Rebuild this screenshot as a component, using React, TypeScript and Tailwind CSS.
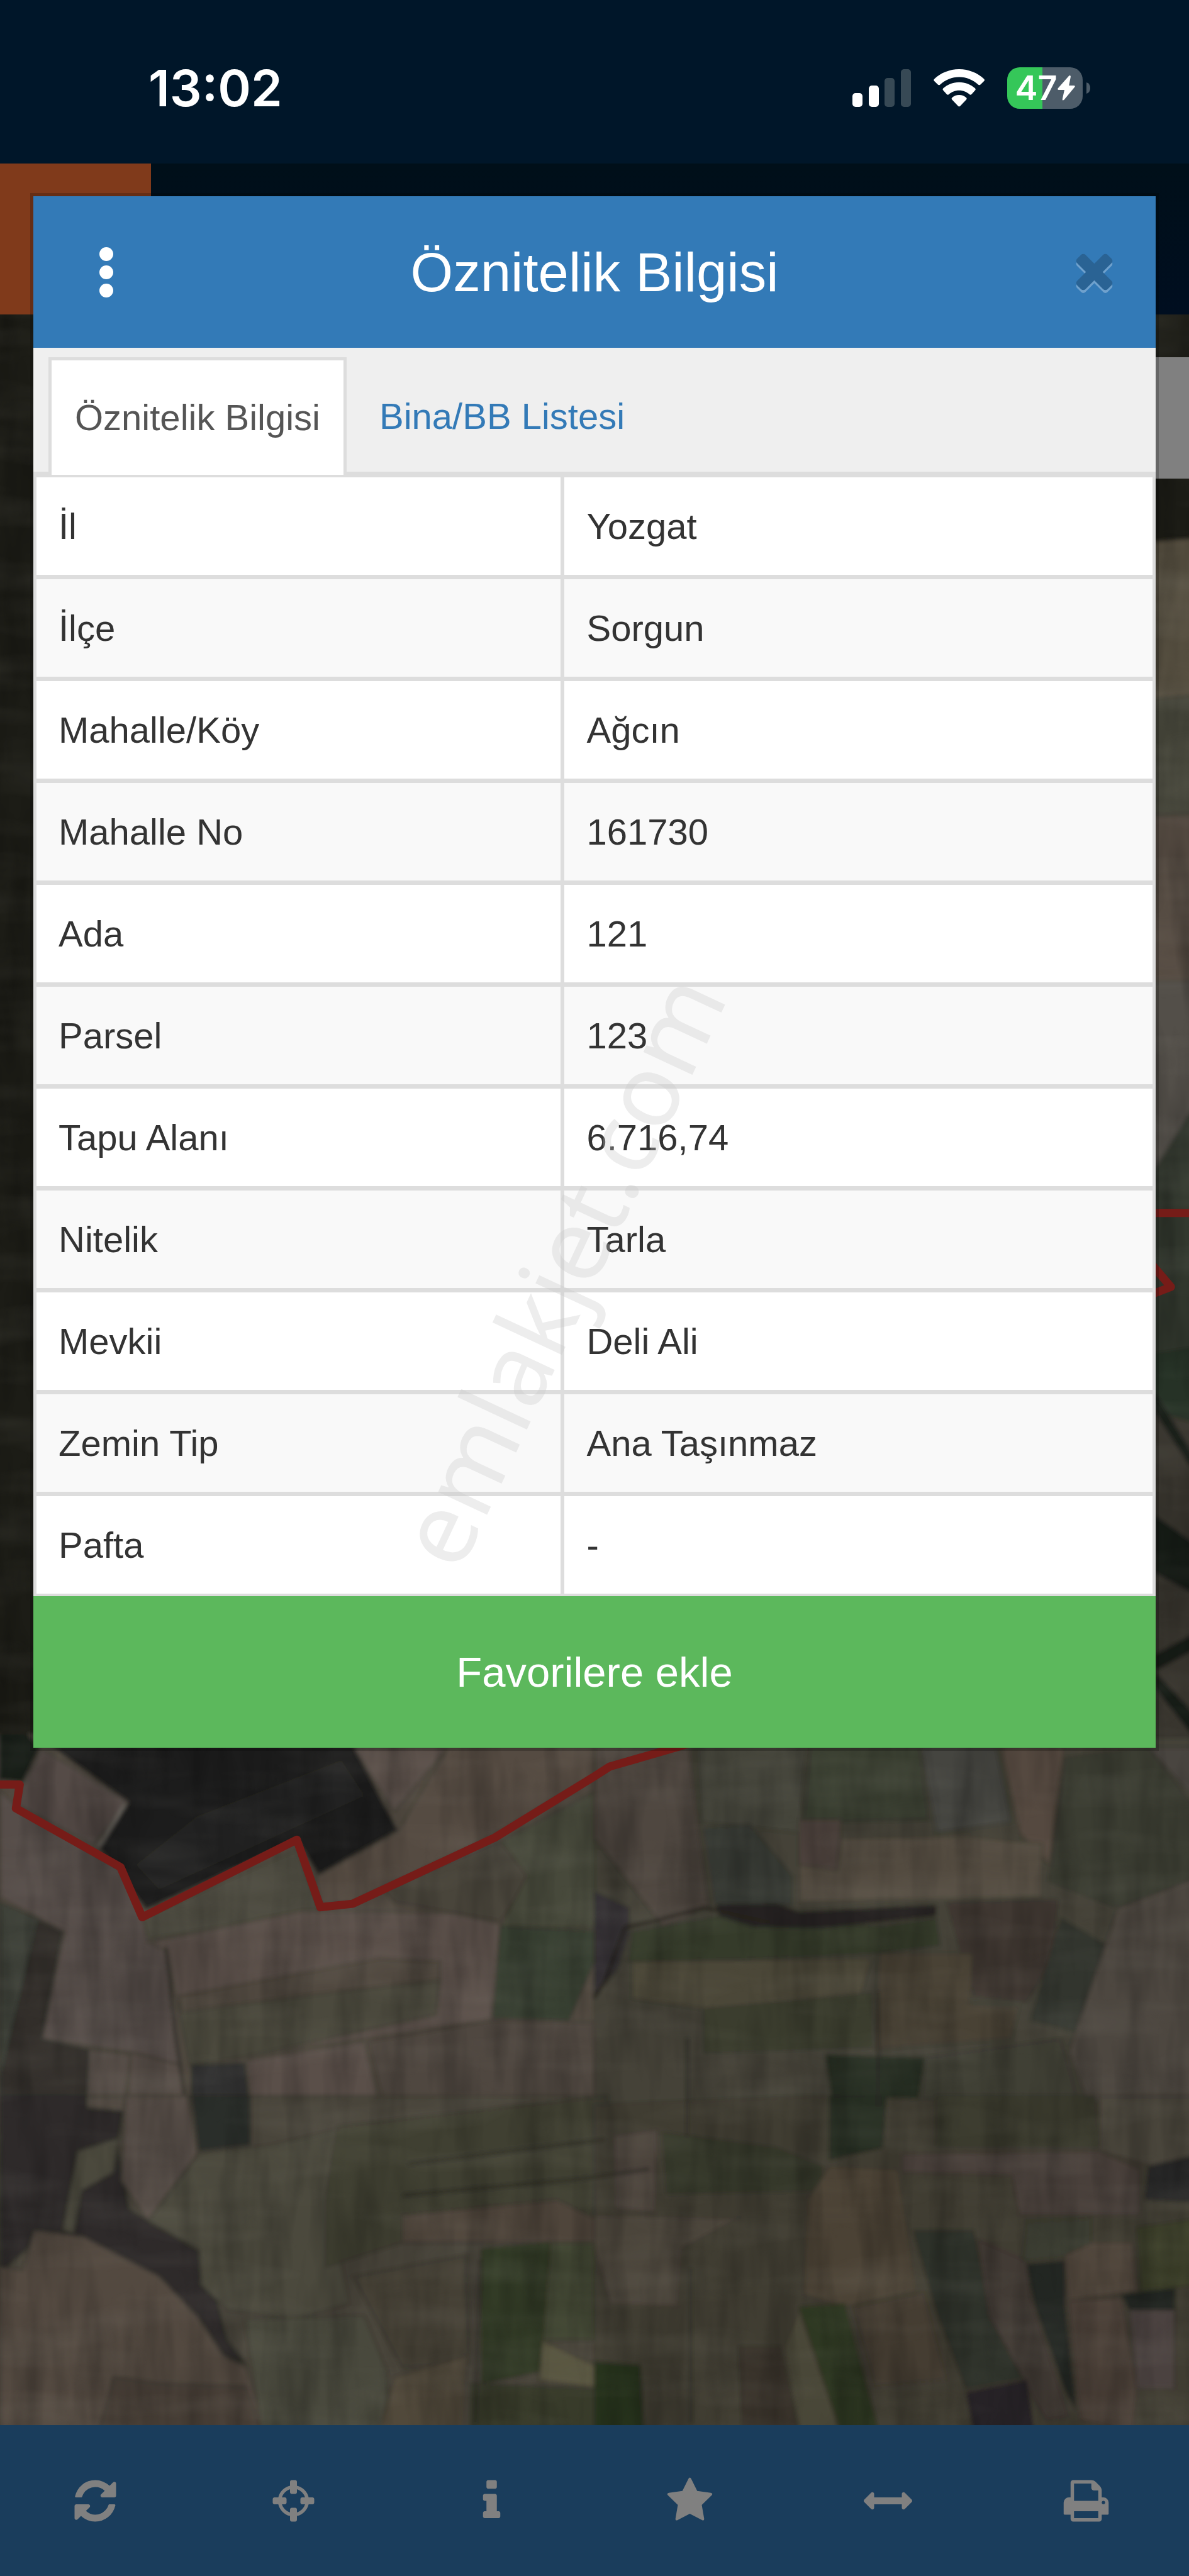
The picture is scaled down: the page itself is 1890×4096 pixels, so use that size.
const rows = [
  { label: "İl", value: "Yozgat" },
  { label: "İlçe", value: "Sorgun" },
  { label: "Mahalle/Köy", value: "Ağcın" },
  { label: "Mahalle No", value: "161730" },
  { label: "Ada", value: "121" },
  { label: "Parsel", value: "123" },
  { label: "Tapu Alanı", value: "6.716,74" },
  { label: "Nitelik", value: "Tarla" },
  { label: "Mevkii", value: "Deli Ali" },
  { label: "Zemin Tip", value: "Ana Taşınmaz" },
  { label: "Pafta", value: "-" },
];

const tools = [
  {
    label: "Yenile",
    path: "M1639 1056q0 5-1 7-64 268-268 434.5t-478 166.5q-146 0-282.5-55t-243.5-157l-129 129q-19 19-45 19t-45-19-19-45v-448q0-26 19-45t45-19h448q26 0 45 19t19 45-19 45l-137 137q71 66 161 102t187 36q134 0 250-65t186-179q11-17 53-117 8-23 30-23h192q13 0 22.5 9.5t9.5 22.5zm25-800v448q0 26-19 45t-45 19h-448q-26 0-45-19t-19-45 19-45l138-138q-148-137-349-137-134 0-250 65t-186 179q-11 17-53 117-8 23-30 23h-199q-13 0-22.5-9.5t-9.5-22.5v-7q65-268 270-434.5t480-166.5q146 0 284 55.5t245 156.5l130-129q19-19 45-19t45 19 19 45z",
  },
  {
    label: "Konum",
    path: "M1325 1024h-109q-26 0-45-19t-19-45v-128q0-26 19-45t45-19h109q-32-108-112.5-188.5t-188.5-112.5v109q0 26-19 45t-45 19h-128q-26 0-45-19t-19-45v-109q-108 32-188.5 112.5t-112.5 188.5h109q26 0 45 19t19 45v128q0 26-19 45t-45 19h-109q32 108 112.5 188.5t188.5 112.5v-109q0-26 19-45t45-19h128q26 0 45 19t19 45v109q108-32 188.5-112.5t112.5-188.5zm339-192v128q0 26-19 45t-45 19h-143q-37 161-154.5 278.5t-278.5 154.5v143q0 26-19 45t-45 19h-128q-26 0-45-19t-19-45v-143q-161-37-278.5-154.5t-154.5-278.5h-143q-26 0-45-19t-19-45v-128q0-26 19-45t45-19h143q37-161 154.5-278.5t278.5-154.5v-143q0-26 19-45t45-19h128q26 0 45 19t19 45v143q161 37 278.5 154.5t154.5 278.5h143q26 0 45 19t19 45z",
  },
  {
    label: "Bilgi",
    path: "M1216 1344v128q0 26-19 45t-45 19h-512q-26 0-45-19t-19-45v-128q0-26 19-45t45-19h64v-384h-64q-26 0-45-19t-19-45v-128q0-26 19-45t45-19h384q26 0 45 19t19 45v576h64q26 0 45 19t19 45zm-128-1152v192q0 26-19 45t-45 19h-256q-26 0-45-19t-19-45v-192q0-26 19-45t45-19h256q26 0 45 19t19 45z",
  },
  {
    label: "Favoriler",
    path: "M1728 647q0 22-26 48l-363 354 86 500q1 7 1 20 0 21-10.5 35.5t-30.5 14.5q-19 0-40-12l-449-236-449 236q-22 12-40 12-21 0-31.5-14.5t-10.5-35.5q0-6 2-20l86-500-364-354q-25-27-25-48 0-37 56-46l502-73 225-455q19-41 49-41t49 41l225 455 502 73q56 9 56 46z",
  },
  {
    label: "Ölçüm",
    path: "M1792 896q0 26-19 45l-256 256q-19 19-45 19t-45-19-19-45v-128h-1024v128q0 26-19 45t-45 19-45-19l-256-256q-19-19-19-45t19-45l256-256q19-19 45-19t45 19 19 45v128h1024v-128q0-26 19-45t45-19 45 19l256 256q19 19 19 45z",
  },
  {
    label: "Yazdır",
    path: "M448 1536h896v-256h-896v256zm0-640h896v-384h-160q-40 0-68-28t-28-68v-160h-640v640zm1152 64q0-26-19-45t-45-19-45 19-19 45 19 45 45 19 45-19 19-45zm128 0v416q0 13-9.5 22.5t-22.5 9.5h-224v160q0 40-28 68t-68 28h-960q-40 0-68-28t-28-68v-160h-224q-13 0-22.5-9.5t-9.5-22.5v-416q0-79 56.5-135.5t135.5-56.5h64v-544q0-40 28-68t68-28h672q40 0 88 20t76 48l152 152q28 28 48 76t20 88v256h64q79 0 135.5 56.5t56.5 135.5z",
  },
];

const closePath =
  "M1490 1322q0 40-28 68l-136 136q-28 28-68 28t-68-28l-294-294-294 294q-28 28-68 28t-68-28l-136-136q-28-28-28-68t28-68l294-294-294-294q-28-28-28-68t28-68l136-136q28-28 68-28t68 28l294 294 294-294q28-28 68-28t68 28l136 136q28 28 28 68t-28 68l-294 294 294 294q28 28 28 68z";

// Field parcels, grouped by map tile: [fill, points]
const tiles = [
  {
    transform: "translate(0 1037.4) scale(.2306 .1627)",
    fields: [
      ["#514a41", "0,0 1600,0 1600,1600 0,1600"],
      ["#5a504a", "930,160 1180,160 1040,400"],
      ["#544c43", "1180,160 1600,160 1600,240 1300,490 930,740 845,750 830,640 1048,475"],
      ["#161a17", "0,0 105,160 60,290 0,280"],
      ["#1c1c1b", "130,150 930,150 1048,470 840,635 783,505 385,765 260,530 340,365"],
      ["#544c47", "110,165 200,240 340,365 245,525 45,375 60,300"],
      ["#232322", "520,420 900,210 960,340 420,690 360,600"],
      ["#574e48", "0,320 50,390 318,610 375,795 440,900 480,1350 340,1300 110,1250 170,850 0,720"],
      ["#4d4b3f", "375,795 783,540 845,770 390,880"],
      ["#302f2c", "0,740 110,810 165,850 110,1250 240,1290 230,1500 330,1530 330,1600 0,1600"],
      ["#3c4038", "0,740 100,800 50,1100 0,1400"],
      ["#585048", "235,1290 345,1310 325,1520 230,1500"],
      ["#564d46", "345,1300 480,1350 505,1600 330,1600"],
      ["#5a5048", "390,890 800,770 1200,780 1320,820 1300,1180 960,1250 500,1340 440,920"],
      ["#4b4a3d", "470,1110 800,1060 1160,1030 1150,1160 640,1320 500,1350"],
      ["#51483f", "470,1090 1000,950 1160,960 1160,1030 800,1090 480,1150"],
      ["#303230", "505,1350 645,1340 665,1600 505,1600"],
      ["#5a5048", "650,1330 960,1260 1020,1600 670,1600"],
      ["#4a453b", "1010,690 1320,510 1400,640 1320,810 1040,740"],
      ["#47483a", "1320,510 1600,300 1600,840 1320,830 1390,640"],
      ["#374032", "1320,830 1600,850 1500,1180 1300,1170"],
      ["#4f463f", "970,1260 1300,1180 1600,1190 1600,1600 1030,1600"],
    ],
  },
  {
    transform: "translate(361.5 1037.4) scale(.2306 .1627)",
    fields: [
      ["#444237", "0,0 1600,0 1600,1600 0,1600"],
      ["#4f463f", "0,160 250,160 300,760 180,830 0,500"],
      ["#45443a", "270,160 560,160 540,480 280,440"],
      ["#3b3f31", "570,160 860,160 880,430 550,440"],
      ["#45443f", "860,160 1060,160 1100,440 900,480"],
      ["#54493f", "1070,160 1240,160 1200,600 1120,480"],
      ["#3b3d33", "1240,200 1460,160 1600,420 1600,640 1380,760 1200,660"],
      ["#4a4541", "1460,160 1600,160 1600,380"],
      ["#524b3f", "540,500 980,490 1180,520 1180,720 540,740"],
      ["#4d423c", "540,430 650,430 650,500 640,620 540,600"],
      ["#373a34", "290,460 410,450 520,640 520,750 320,750"],
      ["#302d30", "0,700 90,760 90,860 60,990 0,1090"],
      ["#343a2c", "100,850 330,790 760,830 900,800 910,900 740,930 440,950 90,960"],
      ["#403832", "930,740 1220,730 1210,950 1140,1110 1000,1090"],
      ["#4a4235", "750,930 1000,930 990,1120 1120,1130 1100,1250 740,1290"],
      ["#4b4638", "100,960 730,950 700,1100 290,1140 100,1100"],
      ["#3a3e2f", "290,1140 730,1080 730,1280 290,1300"],
      ["#33362f", "1230,800 1350,900 1330,1250 1150,1180"],
      ["#4d463f", "1380,760 1600,640 1600,1600 1330,1600 1250,1300"],
      ["#262e23", "610,1310 870,1320 840,1600 640,1600"],
      ["#403f35", "870,1320 1230,1250 1300,1600 860,1600"],
      ["#252421", "320,750 480,745 540,775 900,750 900,790 600,835 420,830 330,790"],
    ],
  },
  {
    transform: "translate(0 1275.5) scale(.2306 .1861)",
    fields: [
      ["#48443a", "340,0 1600,0 1600,1100 0,1100 0,100"],
      ["#2d2c29", "0,0 330,0 310,160 340,370 540,520 600,800 650,880 300,700 90,480 0,580"],
      ["#564d46", "330,0 495,0 520,190 390,410 320,280"],
      ["#544d45", "230,0 330,0 325,50 230,40"],
      ["#4c493e", "205,180 310,140 300,250 215,310 195,450 165,440"],
      ["#2c2d2b", "505,0 660,0 660,160 525,180"],
      ["#4b493d", "525,190 720,160 890,110 920,250 880,400 920,680 780,730 600,700 530,620 525,500 390,410"],
      ["#403f33", "890,100 1600,0 1600,480 1060,480 860,560 860,330"],
      ["#4f453b", "1060,390 1470,340 1600,420 1600,480 1060,480"],
      ["#524841", "90,440 220,460 420,590 520,720 590,850 650,890 700,1100 0,1100 0,560 60,570"],
      ["#494039", "300,920 420,940 650,950 690,1100 260,1100"],
      ["#4a483c", "645,730 960,720 1020,900 1030,1100 690,1100"],
      ["#443f34", "930,590 1230,520 1240,880 1060,890"],
      ["#51483b", "1040,920 1230,850 1220,1100 1000,1100"],
      ["#303b25", "1270,500 1450,480 1430,900 1270,940"],
      ["#414430", "1450,480 1600,480 1600,800 1430,800"],
      ["#585440", "1430,800 1600,900 1600,960 1420,930"],
      ["#393b2c", "1240,940 1600,960 1600,1100 1240,1100"],
    ],
  },
  {
    transform: "translate(361.5 1275.5) scale(.2306 .1861)",
    fields: [
      ["#413c32", "0,30 600,0 1600,30 1600,1100 0,1100"],
      ["#4d443d", "50,130 165,110 160,380 55,370"],
      ["#36382c", "180,120 480,170 600,230 600,310 190,320"],
      ["#252d22", "620,0 770,0 760,170 620,210"],
      ["#3a3b2f", "900,0 1320,0 1330,160 900,160"],
      ["#4a413a", "810,190 1330,180 1440,240 1440,390 1120,390 1100,260 810,250"],
      ["#4a443b", "1330,0 1600,0 1600,200 1470,230 1330,180"],
      ["#262826", "1460,230 1600,190 1600,350 1450,340"],
      ["#4c453b", "0,390 380,400 230,500 220,690 40,680 0,500"],
      ["#4b4335", "560,340 620,230 800,240 850,640 660,690 550,650"],
      ["#453c31", "680,690 870,640 930,930 740,950"],
      ["#2e312a", "840,440 1000,440 1040,700 1150,920 980,960 900,700"],
      ["#433a35", "1010,470 1140,540 1150,660 1250,1050 1190,1060 1040,720"],
      ["#3a3c30", "1140,410 1310,400 1310,520 1130,540"],
      ["#50453b", "1240,520 1310,480 1420,480 1430,640 1250,670"],
      ["#3d402c", "1430,430 1600,400 1600,620 1440,640"],
      ["#232523", "1140,550 1240,540 1240,680 1270,1030 1240,960 1160,680"],
      ["#4c4139", "1250,670 1390,660 1430,950 1420,1100 1280,1060"],
      ["#4b423f", "1410,700 1530,700 1530,960 1430,960"],
      ["#222723", "1390,650 1530,630 1530,700 1410,700"],
      ["#4a4637", "500,820 540,700 650,1100 540,1100"],
      ["#2f3824", "540,690 660,680 750,1100 650,1100"],
      ["#37322b", "380,820 490,820 540,1100 390,1100"],
      ["#262127", "980,970 1140,930 1160,1100 1000,1100"],
      ["#26301f", "0,870 120,880 130,1100 0,1100"],
    ],
  },
  {
    transform: "translate(680 187)",
    fields: [
      ["#1c1c19", "0,0 50,0 50,142 0,142"],
      ["#574f40", "0,144 50,140 50,240 0,240"],
      ["#47463a", "0,240 50,235 50,310 0,310"],
      ["#554c43", "0,310 50,308 50,500 0,545"],
      ["#53504a", "0,410 50,410 50,500 0,545"],
      ["#33382f", "0,560 50,480 50,640 0,640"],
      ["#253226", "0,640 50,632 50,680 0,665"],
      ["#38352e", "0,665 50,680 50,870 0,870"],
      ["#171a19", "22,660 50,705 50,715 22,672"],
      ["#171a19", "22,735 50,755 50,785 22,770"],
      ["#191a19", "22,820 50,805 50,815 22,830 50,860 50,875 22,840"],
    ],
  },
  {
    transform: "translate(0 187)",
    fields: [["#1b1b17", "-5,0 24,0 24,868 -5,868"]],
  },
];

const MapView = () => {
  return (
    <svg
      className="absolute inset-0 w-full h-full"
      viewBox="0 99 723 1377"
      preserveAspectRatio="none"
      aria-hidden="true"
    >
      <defs>
        <filter id="soften" x="0" y="0" width="1" height="1">
          <feGaussianBlur stdDeviation="1.2" />
        </filter>
        <filter id="furrows" x="0" y="0" width="1" height="1">
          <feTurbulence type="fractalNoise" baseFrequency="0.06 0.012" numOctaves="3" seed="7" />
          <feColorMatrix values="0 0 0 0 0  0 0 0 0 0  0 0 0 0 0  1.6 0 0 0 -0.6" />
        </filter>
        <filter id="ridges" x="0" y="0" width="1" height="1">
          <feTurbulence type="fractalNoise" baseFrequency="0.012 0.05" numOctaves="3" seed="3" />
          <feColorMatrix values="0 0 0 0 .6  0 0 0 0 .58  0 0 0 0 .5  1.2 0 0 0 -0.5" />
        </filter>
      </defs>
      <rect y="99" width="723" height="1377" fill="#46423a" />
      <g filter="url(#soften)">
        {tiles.map((tile) => (
          <g key={tile.transform} transform={tile.transform}>
            {tile.fields.map(([fill, points]) => (
              <polygon key={points} fill={fill} points={points} stroke="#2b2a24" strokeOpacity="0.25" strokeWidth="4" vectorEffect="non-scaling-stroke" />
            ))}
          </g>
        ))}
        <g fill="none" stroke="#25241f" strokeWidth="2">
          <path d="M361 1216l7-10 12-33 18-4 30-8 40 9" />
          <path d="M101 1185l5 50 6 40M248 1317l120-15M245 1336l110-10 40-6" strokeOpacity="0.6" />
          <path d="M292 1375l-3 100M418 1240v60M534 1212v70M420 1380v95" strokeOpacity="0.5" />
        </g>
        <path d="M60 1124l16-26" fill="none" stroke="#6a6660" strokeWidth="2" />
      </g>
      <rect y="99" width="723" height="1377" filter="url(#furrows)" opacity="0.3" />
      <rect y="99" width="723" height="1377" filter="url(#ridges)" opacity="0.14" />
      <g fill="none" stroke="#761c18" strokeWidth="5" strokeLinejoin="round">
        <path d="M-2 1086h14l-2.3 14.5 63.6 35.8 13.2 30.5 94-47.2 14.3 41.1 19.6-2.1 86.5-40.3 60.6-37.3 9.2-5.9L440 1055" />
        <path d="M690 738h35M695 763l17 20-18 7" />
      </g>
    </svg>
  );
};

const StatusBar = () => {
  return (
    <header className="h-[260px] bg-[#001629] text-white pl-[236px] pr-[157px] pt-5 flex items-center justify-between font-['Inter',sans-serif]">
      <time className="text-[80px] leading-[96px] font-semibold">13:02</time>
      <div className="flex items-center gap-9">
        <svg className="w-[93px] h-[60px]" viewBox="0 0 93 60" aria-label="Sinyal">
          <rect x="0" y="38" width="16" height="22" rx="5" fill="#fff" />
          <rect x="26" y="26" width="16" height="34" rx="5" fill="#fff" />
          <rect x="51" y="14" width="16" height="46" rx="5" fill="#374955" />
          <rect x="77" y="0" width="16" height="60" rx="5" fill="#374955" />
        </svg>
        <svg className="w-[81px] h-[60px]" viewBox="540 132 273 202" fill="#fff" aria-label="Wi-Fi">
          <path d="M677 132c52 0 98 20 133 52q6 6 0 12l-18 18q-6 6-12 1c-29-26-64-41-103-41s-74 15-103 41q-6 5-12-1l-18-18q-6-6 0-12c35-32 81-52 133-52z" />
          <path d="M677 202c33 0 62 12 85 32q6 6 0 12l-18 20q-6 6-12 1c-15-13-33-21-55-21s-40 8-55 21q-6 5-12-1l-18-20q-6-6 0-12c23-20 52-32 85-32z" />
          <path d="M677 270c15 0 28 5 38 14q5 5 0 11l-32 34q-6 6-12 0l-32-34q-5-6 0-11c10-9 23-14 38-14z" />
        </svg>
        <div className="flex items-center gap-1.5">
          <div className="w-[120px] h-[66px] rounded-[20px] bg-[linear-gradient(90deg,#35c759_47%,#4d5c69_47%)] flex items-center justify-center">
            <span className="text-[54px] leading-[66px] font-semibold">47</span>
            <svg className="w-7 h-10" viewBox="1213 170 95 138" fill="#fff" aria-hidden="true">
              <path d="M1276 171q10-3 8 8l-9 46h28q8 2 3 9l-58 70q-10 6-9-5l11-50h-32q-8-2-3-9z" />
            </svg>
          </div>
          <svg className="w-1.5 h-[18px]" viewBox="0 0 6 18" aria-hidden="true">
            <path d="M0 0q6 2 6 9t-6 9z" fill="#4d5c69" />
          </svg>
        </div>
      </div>
    </header>
  );
};

const AttributeModal = () => {
  return (
    <section className="relative bg-white shadow-[0_0_0_5px_rgba(0,0,0,0.2)]">
      <div className="h-[241px] bg-[#337ab7] grid grid-cols-[240px_1fr_240px] items-center">
        <button type="button" aria-label="Menü" className="w-[232px] h-full flex flex-col items-center justify-center gap-[7px]">
          <span className="size-[22px] rounded-full bg-white" />
          <span className="size-[22px] rounded-full bg-white" />
          <span className="size-[22px] rounded-full bg-white" />
        </button>
        <h1 className="text-[87px] leading-[96px] text-white text-center">Öznitelik Bilgisi</h1>
        <button type="button" aria-label="Kapat" className="h-full pr-[54px] flex items-center justify-end">
          <svg className="size-[87px]" viewBox="0 64 1792 1792">
            <path d={closePath} fill="#6fa1cd" transform="translate(0 94)" />
            <path d={closePath} fill="#2a6394" />
          </svg>
        </button>
      </div>

      <nav className="h-[206px] bg-[#efefef] border-b-9 border-[#dddddd] pl-6 pt-[15px] flex text-[58px] leading-[80px]">
        <a
          href="#oznitelik"
          className="h-[187px] w-[474px] bg-white text-[#555555] border-5 border-b-0 border-[#dddddd] flex items-center justify-center"
        >
          Öznitelik Bilgisi
        </a>
        <a href="#bina" className="h-[187px] px-[52px] text-[#337ab7] flex items-center">
          Bina/BB Listesi
        </a>
      </nav>

      <table className="w-full table-fixed border-separate border-spacing-0 text-[58px] leading-[80px] text-[#333333]">
        <colgroup>
          <col className="w-[47%]" />
          <col />
        </colgroup>
        <tbody>
          {rows.map((row) => (
            <tr key={row.label} className="group even:bg-[#f9f9f9]">
              <th
                scope="row"
                className="h-[162px] group-last:h-[159px] p-0 pl-[35px] text-left font-normal border-[#dddddd] border-l-5 border-b-7 group-last:border-b-4"
              >
                {row.label}
              </th>
              <td className="p-0 pl-[35px] border-[#dddddd] border-l-6 border-r-5 border-b-7 group-last:border-b-4">
                {row.value}
              </td>
            </tr>
          ))}
        </tbody>
      </table>

      <button type="button" className="block w-full h-[241px] bg-[#5cb85c] text-white text-[67px] leading-[80px]">
        Favorilere ekle
      </button>

      <span className="absolute left-[835px] top-[1706px] -translate-x-1/2 -translate-y-1/2 -rotate-65 text-[160px] leading-[160px] text-[#c8c8c8]/32 font-['Noto_Sans',sans-serif] pointer-events-none">
        emlakjet.com
      </span>
    </section>
  );
};

const Toolbar = () => {
  return (
    <footer className="h-[240px] bg-[#1a3d5c] grid grid-cols-6">
      {tools.map((tool) => (
        <button key={tool.label} type="button" aria-label={tool.label} className="pr-3 flex items-center justify-center">
          <svg className="size-[77px]" viewBox="0 0 1792 1792" fill="#808080">
            <path d={tool.path} />
          </svg>
        </button>
      ))}
    </footer>
  );
};

export default function App() {
  return (
    <div className="min-h-screen flex flex-col font-['Liberation_Sans',Arial,sans-serif]">
      <StatusBar />
      <main className="relative flex-1 overflow-hidden px-[53px] py-[52px]">
        <MapView />
        <div className="absolute inset-x-0 top-0 h-[240px] bg-linear-to-b from-[#000f19] to-[#000e20]">
          <div className="size-[240px] bg-[#803a1b]" />
        </div>
        <div className="absolute right-0 top-[308px] w-[120px] h-[193px] bg-[#808080]" />
        <AttributeModal />
      </main>
      <Toolbar />
    </div>
  );
}
